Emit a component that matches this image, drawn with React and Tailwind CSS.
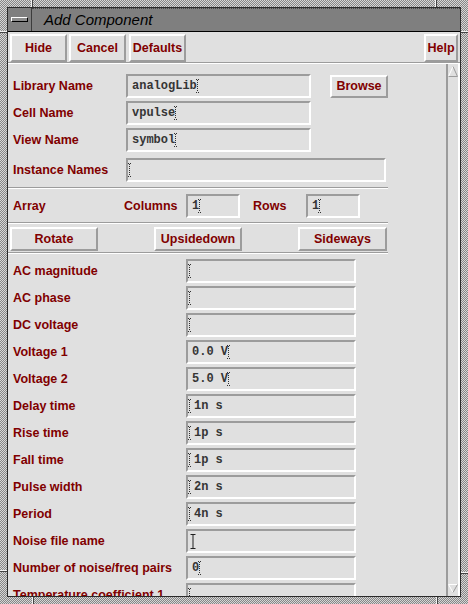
import React from 'react';

const raised = 'border-2 border-t-white border-l-white border-b-[#9c9c9c] border-r-[#9c9c9c]';
const sunken = 'border-2 border-t-[#9c9c9c] border-l-[#9c9c9c] border-b-white border-r-white';
const label = "text-[12.5px] font-bold text-[#800000] whitespace-nowrap";

function Caret({ solid }) {
  if (solid) {
    return (
      <svg width="6" height="15" className="shrink-0">
        <path d="M0.5 0.5H5.5M3 0.5V14.5M0.5 14.5H5.5" stroke="#202020" strokeWidth="1" fill="none" />
      </svg>
    );
  }
  return (
    <svg width="4" height="14" className="shrink-0">
      <g fill="#303030">
        <rect x="0" y="0" width="1" height="1" />
        <rect x="2" y="0" width="1" height="1" />
        {[1, 3, 5, 7, 9, 11].map((y) => (
          <rect key={y} x="1" y={y} width="1" height="1" />
        ))}
        <rect x="0" y="13" width="1" height="1" />
        <rect x="2" y="13" width="1" height="1" />
      </g>
    </svg>
  );
}

function Field({ className, value, caretFirst, solid }) {
  return (
    <div className={`h-[24px] ${sunken} flex items-center overflow-hidden ${className}`}>
      {solid ? (
        <div className="pl-[2px]"><Caret solid /></div>
      ) : caretFirst ? (
        <>
          <Caret />
          <span className="pl-[2px] text-[12px] font-bold text-[#353535] font-['Liberation_Mono',monospace] whitespace-pre">{value}</span>
        </>
      ) : (
        <>
          <span className="pl-[4px] text-[12px] font-bold text-[#353535] font-['Liberation_Mono',monospace] whitespace-pre">{value}</span>
          <span className="-ml-[1px]"><Caret /></span>
        </>
      )}
    </div>
  );
}

function Button({ children, className }) {
  return (
    <div className={`${raised} flex items-center justify-center ${label} ${className}`}>
      {children}
    </div>
  );
}

function Separator() {
  return <div className="w-[380px] h-[2px] border-t border-t-[#9c9c9c] border-b border-b-white" />;
}

const params = [
  ['AC magnitude', '', true],
  ['AC phase', '', true],
  ['DC voltage', '', true],
  ['Voltage 1', '0.0 V', false],
  ['Voltage 2', '5.0 V', false],
  ['Delay time', '1n s', true],
  ['Rise time', '1p s', true],
  ['Fall time', '1p s', true],
  ['Pulse width', '2n s', true],
  ['Period', '4n s', true],
  ['Noise file name', '', 'solid'],
  ['Number of noise/freq pairs', '0', false],
  ['Temperature coefficient 1', '', true],
];

export default function App() {
  return (
    <div className="relative w-[468px] h-[604px] overflow-hidden pt-[7px] pl-[7px] bg-[repeating-conic-gradient(#868686_0_25%,#d6d6d6_0_50%)] bg-[length:2px_2px] font-['Liberation_Sans',Arial,sans-serif]">
      {/* frame resize notches */}
      <div className="absolute left-[31px] top-0 w-[1px] h-[7px] bg-[#f2f2f2]" />
      <div className="absolute left-[32px] top-0 w-[1px] h-[7px] bg-[#444]" />
      <div className="absolute left-[435px] top-0 w-[1px] h-[7px] bg-[#f2f2f2]" />
      <div className="absolute left-[436px] top-0 w-[1px] h-[7px] bg-[#444]" />
      <div className="absolute left-0 top-[31px] w-[7px] h-[1px] bg-[#f2f2f2]" />
      <div className="absolute left-0 top-[32px] w-[7px] h-[1px] bg-[#444]" />
      <div className="absolute right-0 top-[31px] w-[7px] h-[1px] bg-[#f2f2f2]" />
      <div className="absolute right-0 top-[32px] w-[7px] h-[1px] bg-[#444]" />
      <div className="absolute left-0 top-[570px] w-[7px] h-[1px] bg-[#f2f2f2]" />
      <div className="absolute left-0 top-[571px] w-[7px] h-[1px] bg-[#444]" />
      <div className="absolute right-0 top-[572px] w-[7px] h-[1px] bg-[#f2f2f2]" />
      <div className="absolute right-0 top-[573px] w-[7px] h-[1px] bg-[#444]" />
      <div className="absolute left-[32px] bottom-0 w-[1px] h-[7px] bg-[#f2f2f2]" />
      <div className="absolute left-[33px] bottom-0 w-[1px] h-[7px] bg-[#444]" />
      <div className="absolute left-[436px] bottom-0 w-[1px] h-[7px] bg-[#f2f2f2]" />
      <div className="absolute left-[437px] bottom-0 w-[1px] h-[7px] bg-[#444]" />

      <div className="w-[454px] h-[590px] border border-[#2a2a2a] bg-[#e0e0e0] flex flex-col overflow-hidden">
        {/* Title bar */}
        <div className="h-[24px] shrink-0 flex bg-[#7f7f7f] border-b border-black">
          <div className="w-[24px] flex items-center justify-center border-r border-[#3c3c3c]">
            <div className="w-[17px] h-[5px] border border-t-white border-l-white border-b-black border-r-black bg-[#8c8c8c]" />
          </div>
          <div className="flex-1 flex items-center pl-[12px] text-[15px] italic text-black border-t border-dotted border-[#444]">
            Add Component
          </div>
        </div>

        {/* Top buttons */}
        <div className="shrink-0 flex pt-[2px] px-[2px] h-[30px]">
          <Button className="w-[57px] h-[28px]">Hide</Button>
          <Button className="w-[57px] h-[28px] ml-[2px]">Cancel</Button>
          <Button className="w-[57px] h-[28px] ml-[3px]">Defaults</Button>
          <div className="flex-1" />
          <Button className="w-[34px] h-[28px]">Help</Button>
        </div>
        <div className="shrink-0 h-[2px] border-t border-t-[#9c9c9c] border-b border-b-white" />

        <div className="flex-1 flex min-h-0">
          {/* Form */}
          <div className="w-[438px] overflow-hidden pt-[10px]">
            <div className="flex items-center h-[24px]">
              <div className={`w-[118px] pl-[5px] ${label}`}>Library Name</div>
              <Field className="w-[185px]" value="analogLib" />
              <Button className="w-[58px] h-[23px] ml-[19px]">Browse</Button>
            </div>
            <div className="flex items-center h-[24px] mt-[3px]">
              <div className={`w-[118px] pl-[5px] ${label}`}>Cell Name</div>
              <Field className="w-[185px]" value="vpulse" />
            </div>
            <div className="flex items-center h-[24px] mt-[3px]">
              <div className={`w-[118px] pl-[5px] ${label}`}>View Name</div>
              <Field className="w-[185px]" value="symbol" />
            </div>
            <div className="flex items-center h-[24px] mt-[6px]">
              <div className={`w-[118px] pl-[5px] ${label}`}>Instance Names</div>
              <Field className="w-[260px]" value="" caretFirst />
            </div>

            <div className="mt-[5px]"><Separator /></div>

            <div className="flex items-center h-[24px] mt-[5px]">
              <div className={`w-[116px] pl-[5px] ${label}`}>Array</div>
              <div className={`w-[62px] ${label}`}>Columns</div>
              <Field className="w-[54px]" value="1" />
              <div className={`w-[53px] ml-[13px] ${label}`}>Rows</div>
              <Field className="w-[54px]" value="1" />
            </div>

            <div className="mt-[4px]"><Separator /></div>

            <div className="w-[380px] flex justify-between pl-[2px] pr-[1px] mt-[3px]">
              <Button className="w-[88px] h-[24px]">Rotate</Button>
              <Button className="w-[88px] h-[24px]">Upsidedown</Button>
              <Button className="w-[89px] h-[24px]">Sideways</Button>
            </div>

            <div className="mt-[1px]"><Separator /></div>

            <div className="pt-[5px] flex flex-col gap-[3px]">
              {params.map(([name, value, mode]) => (
                <div key={name} className="flex items-center h-[24px] shrink-0">
                  <div className={`w-[178px] pl-[5px] ${label}`}>{name}</div>
                  <Field
                    className="w-[170px]"
                    value={value}
                    caretFirst={mode === true}
                    solid={mode === 'solid'}
                  />
                </div>
              ))}
            </div>
          </div>

          {/* Scrollbar */}
          <div className="w-[14px] flex flex-col border-l-2 border-l-[#9c9c9c] border-r-2 border-r-white pt-[2px] pb-[3px]">
            <svg width="10" height="11">
              <path d="M0.5 10.5L5 0.5" stroke="#ffffff" strokeWidth="1" fill="none" />
              <path d="M5 0.5L9.5 10.5H0.5" stroke="#9c9c9c" strokeWidth="1" fill="none" />
            </svg>
            <div className="flex-1" />
            <svg width="10" height="9">
              <path d="M0.5 0.5H9.5M0.5 0.5L5 8.5" stroke="#ffffff" strokeWidth="1" fill="none" />
              <path d="M5 8.5L9.5 0.5" stroke="#9c9c9c" strokeWidth="1" fill="none" />
            </svg>
          </div>
        </div>
      </div>
    </div>
  );
}
